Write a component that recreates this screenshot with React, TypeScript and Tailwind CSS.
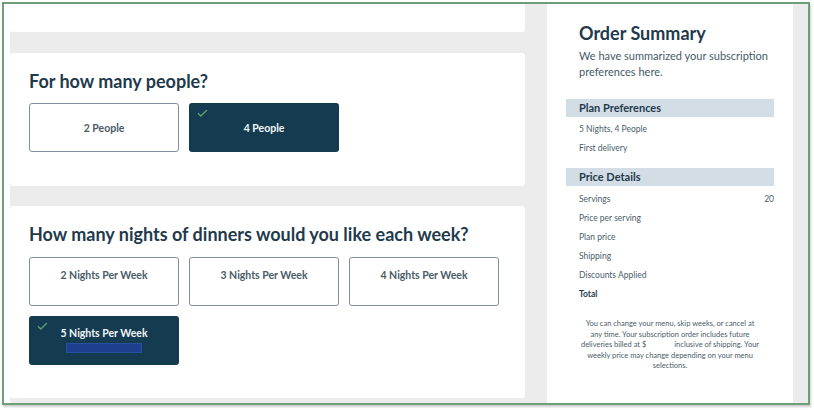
import React from "react";

const font = { fontFamily: "Lato, 'Noto Sans', sans-serif" };

function Check() {
  return (
    <svg width="11" height="8" viewBox="0 0 11 8" className="absolute left-[8px] top-[6px]">
      <path d="M1 4.2 L3.8 7 L10 1" fill="none" stroke="#5e9e78" strokeWidth="1.3" />
    </svg>
  );
}

function Option({ label, selected, top, bar }: { label: string; selected?: boolean; top?: boolean; bar?: boolean }) {
  return (
    <div
      className={`relative w-[150px] h-[49px] rounded-[3px] flex flex-col items-center ${top ? "justify-start pt-[9px]" : "justify-center"} ${
        selected ? "bg-[#153b50] text-[#f2f5f7]" : "bg-white border border-[#7f8f9b] text-[#4a5b68]"
      }`}
    >
      {selected && <Check />}
      <span className="text-[10.5px] leading-[16px] font-bold">{label}</span>
      {bar && <div className="mt-[2px] w-[76px] h-[10px] bg-[#1d3f8e] border border-[#2a4fa0]" />}
    </div>
  );
}

export default function App() {
  return (
    <div className="w-[814px] h-[410px] bg-white" style={font}>
      <div className="ml-[2px] mt-[2px] w-[808px] h-[403px] border-2 border-[#6f9f79] flex shadow-[1px_2px_2px_rgba(0,0,0,0.2)]">
        <div className="w-[6px] bg-white" />
        <div className="w-[537px] bg-[#ececed] pr-[22px] flex flex-col">
          <div className="h-[28px] bg-white rounded-b-[3px]" />
          <div className="mt-[21px] h-[133px] bg-white rounded-[3px] pl-[19px] pt-[17px]">
            <h2 className="text-[18px] leading-[22px] font-bold text-[#1f3a4c]">For how many people?</h2>
            <div className="mt-[11px] flex gap-[10px]">
              <Option label="2 People" />
              <Option label="4 People" selected />
            </div>
          </div>
          <div className="mt-[20px] h-[192px] bg-white rounded-[3px] pl-[19px] pt-[17px]">
            <h2 className="text-[18px] leading-[22px] font-bold text-[#1f3a4c]">
              How many nights of dinners would you like each week?
            </h2>
            <div className="mt-[12px] flex gap-[10px]">
              <Option label="2 Nights Per Week" top />
              <Option label="3 Nights Per Week" top />
              <Option label="4 Nights Per Week" top />
            </div>
            <div className="mt-[10px] flex gap-[10px]">
              <Option label="5 Nights Per Week" selected top bar />
            </div>
          </div>
        </div>
        <div className="w-[246px] bg-white px-[19px] pt-[17px]">
          <div className="pl-[13px]">
            <h3 className="text-[18px] leading-[24px] font-bold text-[#1f3a4c]">Order Summary</h3>
            <p className="mt-[3px] text-[11px] leading-[16px] text-[#445a68] whitespace-nowrap">
              We have summarized your subscription
              <br />
              preferences here.
            </p>
          </div>
          <div className="mt-[19px] h-[18px] bg-[#d3dde6] pl-[13px] flex items-center">
            <span className="text-[11px] font-bold text-[#1f3a4c]">Plan Preferences</span>
          </div>
          <div className="pl-[13px] pt-[3px] text-[8.5px] text-[#4a5d6a]">
            <div className="h-[19px] flex items-center">5 Nights, 4 People</div>
            <div className="h-[19px] flex items-center">First delivery</div>
          </div>
          <div className="mt-[10px] h-[18px] bg-[#d3dde6] pl-[13px] flex items-center">
            <span className="text-[11px] font-bold text-[#1f3a4c]">Price Details</span>
          </div>
          <div className="pl-[13px] pt-[4px] text-[8.5px] text-[#4a5d6a]">
            <div className="h-[19px] flex items-center justify-between">
              <span>Servings</span>
              <span>20</span>
            </div>
            <div className="h-[19px] flex items-center">Price per serving</div>
            <div className="h-[19px] flex items-center">Plan price</div>
            <div className="h-[19px] flex items-center">Shipping</div>
            <div className="h-[19px] flex items-center">Discounts Applied</div>
            <div className="h-[19px] flex items-center font-bold text-[#1f3a4c]">Total</div>
          </div>
          <p className="mt-[15px] text-center text-[7.5px] leading-[10.5px] text-[#4a5d6a] whitespace-nowrap">
            You can change your menu, skip weeks, or cancel at
            <br />
            any time. Your subscription order includes future
            <br />
            deliveries billed at $<span className="inline-block w-[28px]" />inclusive of shipping. Your
            <br />
            weekly price may change depending on your menu
            <br />
            selections.
          </p>
        </div>
        <div className="w-[15px] bg-[#ececed]" />
      </div>
    </div>
  );
}
